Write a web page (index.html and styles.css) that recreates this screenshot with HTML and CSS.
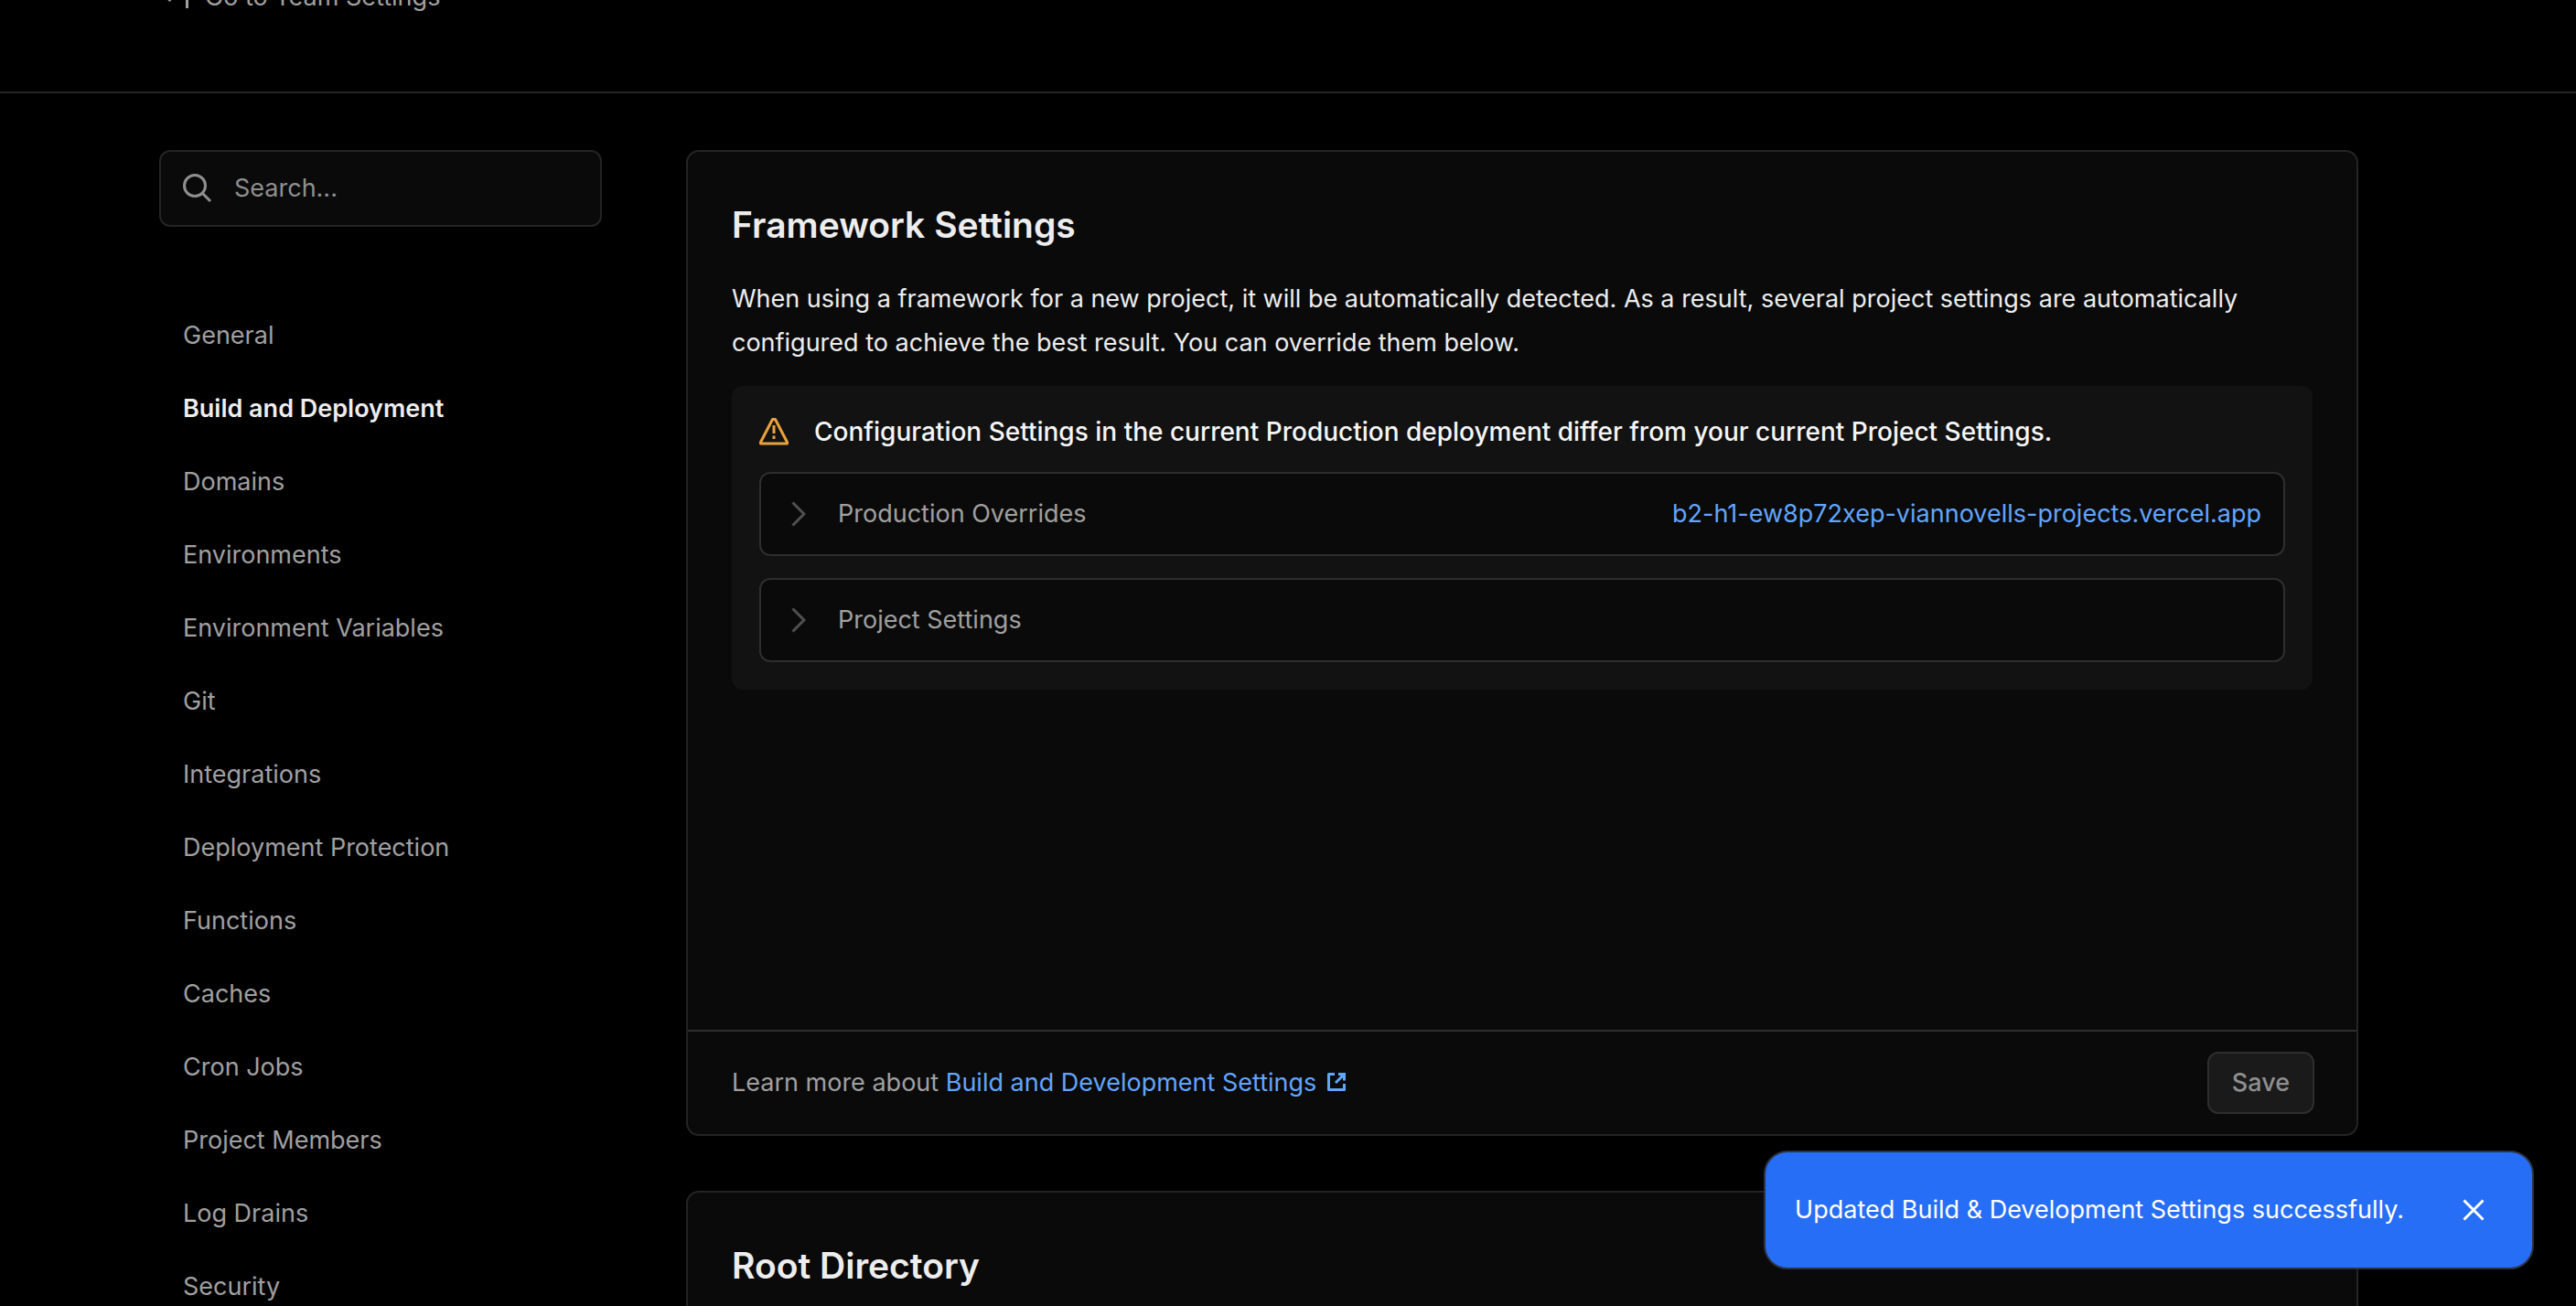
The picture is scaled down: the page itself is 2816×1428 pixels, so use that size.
FILE: index.html
```html
<!DOCTYPE html>
<html lang="en">
<head>
<meta charset="utf-8">
<title>Project Settings</title>
<link rel="stylesheet" href="styles.css">
</head>
<body>
<header class="page-header">
  <a class="team-link" href="#">
    <svg class="team-icon" viewBox="0 0 30 24" aria-hidden="true"><path d="M26.5 24V10H3M8.500 16L2.500 10l6-6"/></svg>
    Go to Team Settings
  </a>
</header>
<div class="layout">
  <aside class="sidebar">
    <label class="search">
      <svg class="search-icon" viewBox="0 0 32 32" aria-hidden="true"><circle cx="13" cy="13" r="11.500"/><path d="M21 21l9 9"/></svg>
      <input class="search-input" type="text" placeholder="Search..." aria-label="Search settings">
    </label>
    <nav class="nav">
      <a class="nav-item" href="#">General</a>
      <a class="nav-item nav-item-active" href="#" aria-current="page">Build and Deployment</a>
      <a class="nav-item" href="#">Domains</a>
      <a class="nav-item" href="#">Environments</a>
      <a class="nav-item" href="#">Environment Variables</a>
      <a class="nav-item" href="#">Git</a>
      <a class="nav-item" href="#">Integrations</a>
      <a class="nav-item" href="#">Deployment Protection</a>
      <a class="nav-item" href="#">Functions</a>
      <a class="nav-item" href="#">Caches</a>
      <a class="nav-item" href="#">Cron Jobs</a>
      <a class="nav-item" href="#">Project Members</a>
      <a class="nav-item" href="#">Log Drains</a>
      <a class="nav-item" href="#">Security</a>
    </nav>
  </aside>
  <main class="content">
    <section class="card">
      <div class="card-body card-body-tall">
        <h2 class="card-title">Framework Settings</h2>
        <p class="card-text">When using a framework for a new project, it will be automatically detected. As a result, several project settings are automatically configured to achieve the best result. You can override them below.</p>
        <div class="notice">
          <div class="notice-head">
            <svg class="notice-icon" viewBox="0 0 32 32" aria-hidden="true"><path stroke-linejoin="round" d="M14.500 2.500h3L30.500 27.500v1.500h-29v-1.500z"/><path d="M16 9v9M16 20.500v3.500"/></svg>
            <strong class="notice-title">Configuration Settings in the current Production deployment differ from your current Project Settings.</strong>
          </div>
          <div class="overrides">
            <div class="override">
              <button class="override-toggle" type="button" aria-expanded="false">
                <svg class="chevron" viewBox="0 0 16 28" aria-hidden="true"><path d="M1.500 1.500L14 14 1.500 26.500"/></svg>
                Production Overrides
              </button>
              <a class="link" href="#">b2-h1-ew8p72xep-viannovells-projects.vercel.app</a>
            </div>
            <div class="override">
              <button class="override-toggle" type="button" aria-expanded="false">
                <svg class="chevron" viewBox="0 0 16 28" aria-hidden="true"><path d="M1.500 1.500L14 14 1.500 26.500"/></svg>
                Project Settings
              </button>
            </div>
          </div>
        </div>
      </div>
      <footer class="card-footer">
        <p class="footer-text">Learn more about <a class="link" href="#">Build and Development Settings <svg class="external-icon" viewBox="0 0 20 20" aria-hidden="true"><path stroke-linejoin="round" d="M8 1.500H1.500v17h17V12"/><path d="M12 1.500h6.500V8.500M18 2L9 11"/><path fill="currentColor" stroke="none" d="M13 2h6v6z"/></svg></a></p>
        <button class="save" type="button" disabled>Save</button>
      </footer>
    </section>
    <section class="card">
      <div class="card-body">
        <h2 class="card-title">Root Directory</h2>
      </div>
    </section>
  </main>
</div>
<div class="toast" role="status">
  <span>Updated Build &amp; Development Settings successfully.</span>
  <button class="toast-close" type="button" aria-label="Dismiss">
    <svg class="close-icon" viewBox="0 0 24 24" aria-hidden="true"><path d="M1.500 1.500l21 21M22.500 1.500l-21 21"/></svg>
  </button>
</div>
</body>
</html>
```
FILE: styles.css
```css
* {
  box-sizing: border-box;
}

html {
  height: 100%;
  overflow: hidden;
}

body {
  height: 100%;
  margin: 0;
  overflow: hidden;
  background: #000;
  color: #ededed;
  font: 27px/48px Inter, "Liberation Sans", sans-serif;
}

h2,
p {
  margin: 0;
}

a {
  color: inherit;
  text-decoration: none;
}

button,
input {
  padding: 0;
  border: 0;
  background: none;
  color: inherit;
  font: inherit;
}

svg {
  flex: none;
  fill: none;
  stroke: currentColor;
  stroke-width: 3;
}

.page-header {
  margin-top: -27px;
  padding: 0 178px 79px;
  border-bottom: 2px solid #242424;
}

.team-link {
  display: flex;
  align-items: center;
  gap: 16px;
  color: #a0a0a0;
}

.team-icon {
  width: 30px;
  height: 24px;
}

.layout {
  display: grid;
  grid-template-columns: 484px 1fr;
  gap: 92px;
  padding: 62px 238px 0 174px;
}

.search {
  display: flex;
  align-items: center;
  gap: 24px;
  height: 84px;
  padding: 0 24px;
  border: 2px solid #242424;
  border-radius: 12px;
  background: #0a0a0a;
  color: #8f8f8f;
}

.search-icon {
  width: 32px;
  height: 32px;
}

.search-input {
  width: 100%;
  outline: none;
}

.search-input::placeholder {
  color: #8f8f8f;
  opacity: 1;
}

.nav {
  display: flex;
  flex-direction: column;
  gap: 16px;
  padding-top: 87px;
}

.nav-item {
  padding: 8px 26px;
  color: #a0a0a0;
}

.nav-item-active {
  color: #ededed;
  font-weight: 600;
}

.content {
  display: flex;
  flex-direction: column;
  gap: 60px;
  min-width: 0;
}

.card {
  border: 2px solid #242424;
  border-radius: 14px;
  background: #0a0a0a;
}

.card-body {
  padding: 48px;
}

.card-body-tall {
  min-height: 960px;
}

.card-title {
  margin-bottom: 25px;
  font-size: 39px;
  font-weight: 600;
  line-height: 64px;
}

.notice {
  display: flex;
  flex-direction: column;
  gap: 20px;
  margin-top: 23px;
  padding: 26px 30px 30px;
  border-radius: 12px;
  background: #121212;
}

.notice-head {
  display: flex;
  align-items: center;
  gap: 28px;
  color: #f5f5f5;
}

.notice-icon {
  width: 32px;
  height: 32px;
  color: #e9a23b;
}

.notice-title {
  font-size: 28px;
  font-weight: 500;
}

.overrides {
  display: flex;
  flex-direction: column;
  gap: 24px;
}

.override {
  display: flex;
  align-items: center;
  justify-content: space-between;
  padding: 20px 24px 20px 33px;
  border: 2px solid #2e2e2e;
  border-radius: 12px;
  background: #0a0a0a;
}

.override-toggle {
  display: flex;
  align-items: center;
  gap: 35px;
  color: #a0a0a0;
}

.chevron {
  width: 16px;
  height: 28px;
  color: #505050;
}

.link {
  color: #62a5fc;
}

.card-footer {
  display: flex;
  align-items: center;
  justify-content: space-between;
  padding: 22px 46px 22px 48px;
  border-top: 2px solid #2e2e2e;
  color: #a0a0a0;
}

.external-icon {
  width: 20px;
  height: 20px;
  margin-left: 4px;
}

.save {
  padding: 8px 25px;
  border: 2px solid #2e2e2e;
  border-radius: 12px;
  background: #1a1a1a;
  color: #8f8f8f;
  font-weight: 500;
}

.toast {
  position: fixed;
  right: 46px;
  bottom: 40px;
  display: flex;
  align-items: center;
  gap: 64px;
  padding: 39px 52px 39px 32px;
  border: 2px solid #2c333f;
  border-radius: 26px;
  background: #276ef6;
  color: #fff;
}

.toast-close {
  display: flex;
}

.close-icon {
  width: 24px;
  height: 24px;
}
```
